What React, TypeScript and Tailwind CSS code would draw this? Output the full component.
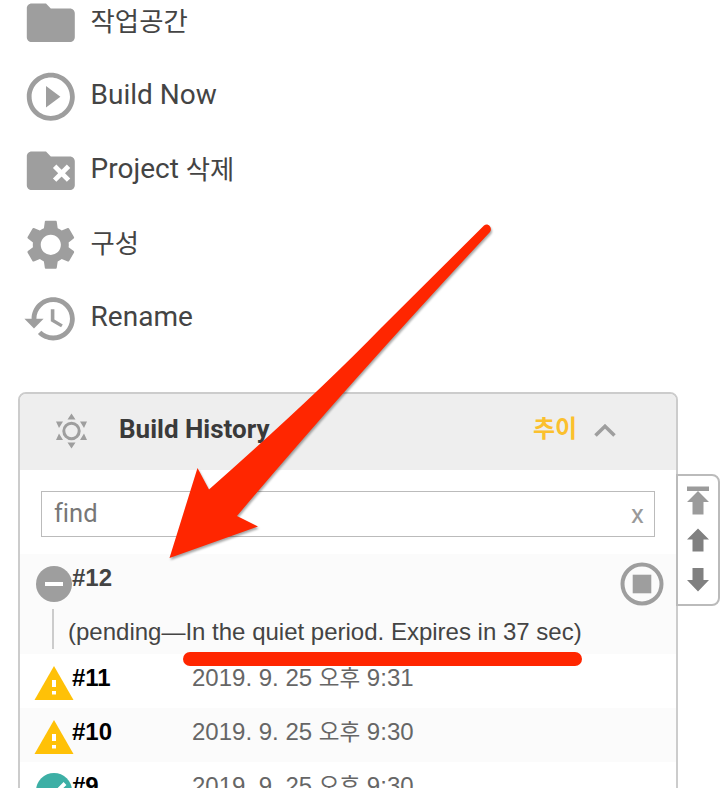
import type { ReactNode } from 'react';

const FOLDER = 'M10 4H4c-1.1 0-1.99.9-1.99 2L2 18c0 1.1.9 2 2 2h16c1.1 0 2-.9 2-2V8c0-1.1-.9-2-2-2h-8l-2-2z';

const sansText = "font-['Liberation_Sans','Noto_Sans_CJK_KR',sans-serif]";

function MenuItem({ label, korean, children }: { label?: string; korean?: string; children: ReactNode }) {
  return (
    <li className="flex h-[74px] items-center">
      <svg viewBox="0 0 24 24" className="h-[57.6px] w-[57.6px] shrink-0 fill-[#9e9e9e]">{children}</svg>
      <span className="mb-[4px] ml-[11px] whitespace-pre text-[28px] leading-8 text-[#444]">
        {label}
        {korean && <span className="relative top-px text-[26.4px]">{korean}</span>}
      </span>
    </li>
  );
}

function Warning() {
  return (
    <svg viewBox="0 0 40 36" className="h-9 w-10">
      <path d="M20 1 39.5 35H.5Z" fill="#ffc107" />
      <path d="M18 15h4v7h-4zM18 26h4v3.5h-4z" fill="#fff" />
    </svg>
  );
}

function Success() {
  return (
    <svg viewBox="0 0 40 36" className="h-9 w-10">
      <circle cx="20" cy="18" r="18" fill="#3dafa5" />
      <path d="m11 18 6 6.5L31 10.5" fill="none" stroke="#fff" strokeWidth="4" />
    </svg>
  );
}

function BuildRow({ id, time, shade, children }: { id: string; time: string; shade?: boolean; children: ReactNode }) {
  return (
    <div className={`flex h-[54px] shrink-0 pl-[13.5px] ${shade ? 'bg-[#fbfbfb]' : 'bg-white'}`}>
      <div className="mt-[11px] w-10">{children}</div>
      <b className="-ml-[1.5px] w-[120px] pt-[10px] text-[24px] leading-7 text-black">{id}</b>
      <span className="whitespace-pre pt-[10px] text-[24px] leading-7 text-[#666]">
        2019. 9. 25 <span className="text-[22.5px]">오후</span> {time}
      </span>
    </div>
  );
}

export default function App() {
  return (
    <main className="relative h-[788px] w-[726px] overflow-hidden bg-white font-[Roboto,'Noto_Sans_CJK_KR',sans-serif]">
      <ul className="-mt-[14px] flex h-[406px] flex-col pl-[22px]">
        <MenuItem korean="작업공간"><path d={FOLDER} /></MenuItem>
        <MenuItem label="Build Now">
          <path d="M10 16.5l6-4.5-6-4.5v9zM12 2C6.48 2 2 6.48 2 12s4.48 10 10 10 10-4.48 10-10S17.52 2 12 2zm0 18c-4.41 0-8-3.59-8-8s3.59-8 8-8 8 3.59 8 8-3.59 8-8 8z" />
        </MenuItem>
        <MenuItem label="Project " korean="삭제">
          <path d={FOLDER} />
          <path d="m13.3 10.1 5.8 5.8m0-5.800-5.8 5.800" transform="translate(.3 0)" fill="none" stroke="#fff" strokeWidth="2" />
        </MenuItem>
        <MenuItem korean="구성">
          <path d="M19.43 12.98c.04-.32.07-.64.07-.98s-.03-.66-.07-.98l2.11-1.65c.19-.15.24-.42.12-.64l-2-3.46c-.12-.22-.39-.3-.61-.22l-2.49 1c-.52-.4-1.08-.73-1.69-.98l-.38-2.65C14.46 2.18 14.25 2 14 2h-4c-.25 0-.46.18-.49.42l-.38 2.65c-.61.25-1.17.59-1.69.98l-2.49-1c-.23-.09-.49 0-.61.22l-2 3.46c-.13.22-.07.49.12.64l2.11 1.65c-.04.32-.07.65-.07.98s.03.66.07.98l-2.11 1.65c-.19.15-.24.42-.12.64l2 3.46c.12.22.39.3.61.22l2.49-1c.52.4 1.08.73 1.69.98l.38 2.65c.03.24.24.42.49.42h4c.25 0 .46-.18.49-.42l.38-2.65c.61-.25 1.17-.59 1.69-.98l2.49 1c.23.09.49 0 .61-.22l2-3.46c.12-.22.07-.49-.12-.64l-2.11-1.65zM12 16.2c-2.320 0-4.200-1.880-4.200-4.200s1.880-4.200 4.200-4.200 4.200 1.880 4.200 4.200-1.880 4.200-4.200 4.200z" />
        </MenuItem>
        <MenuItem label="Rename">
          <path d="M13 3c-4.97 0-9 4.03-9 9H1l4 4 4-4H6c0-3.87 3.13-7 7-7s7 3.13 7 7-3.13 7-7 7c-1.93 0-3.68-.79-4.94-2.06l-1.42 1.42C8.27 19.99 10.51 21 13 21c4.97 0 9-4.03 9-9s-4.03-9-9-9zm-1 5v5l4.28 2.54.72-1.21-3.5-2.08V8H12z" />
        </MenuItem>
      </ul>

      <div className="flex items-start pl-[18px]">
        <section className="flex h-[430px] w-[660px] shrink-0 flex-col overflow-hidden rounded-t-lg border-2 border-[#ccc]">
          <header className="flex h-[76px] shrink-0 items-center bg-[#eee] pb-[2px] pl-[35px]">
            <svg viewBox="0 0 32 36" className="h-9 w-8 fill-[#9e9e9e]">
              <circle cx="16.500" cy="18" r="7.700" fill="none" stroke="#9e9e9e" strokeWidth="3" />
              <path d="m16.500.5 4 6h-8zM16.500 35.500l4-6h-8zM1 8.500H8L4 15zM32 8.500H25L29 15zM1 27H8L4 20.500zM32 27H25L29 20.500z" />
            </svg>
            <h2 className="mb-[4px] ml-[32px] w-[414px] text-[26px] font-bold text-[#3a3a3a]">Build History</h2>
            <span className="mb-[4px] text-[24px] font-bold text-[#fbc02d]">추이</span>
            <svg viewBox="0 0 22 14" className="ml-[17px] h-[14px] w-[22px]">
              <path d="m1.500 11.500 9.500-9.200L20.500 11.500" fill="none" stroke="#9e9e9e" strokeWidth="3.600" />
            </svg>
          </header>
          <div className="h-[84px] shrink-0 px-[21px] pt-[21px]">
            <div className="flex h-[46px] items-center justify-between border border-[#bbb] pl-3 pr-[10px] text-[26px]">
              <span className="mb-px text-[25.5px] text-[#777] [font-variant-ligatures:none]">find</span>
              <span className="text-[#999]">x</span>
            </div>
          </div>
          <div className={sansText}>
            <div className="h-[100px] bg-[#fbfbfb] pl-[15.500px] pr-[12px]">
              <div className="flex h-[55px]">
                <svg viewBox="0 0 36 36" className="mt-[11.500px] h-9 w-9">
                  <circle cx="18" cy="18" r="18" fill="#9e9e9e" />
                  <path d="M9 16h18v4H9z" fill="#fff" />
                </svg>
                <b className="ml-[.5px] grow pt-[10px] text-[24px] leading-7 text-[#444]">#12</b>
                <svg viewBox="0 0 44 44" className="mt-[7.500px] h-11 w-11">
                  <circle cx="22" cy="22" r="19.500" fill="none" stroke="#9e9e9e" strokeWidth="4" />
                  <path d="M12.700 12.700h18.600v18.600H12.700z" fill="#9e9e9e" />
                </svg>
              </div>
              <div className="ml-[16.500px] h-10 border-l-2 border-[#ccc] pl-[14px]">
                <p className="whitespace-nowrap pt-[9px] text-[24px] leading-7 text-[#444]">(pending—In the quiet period. Expires in 37 sec)</p>
              </div>
            </div>
            <BuildRow id="#11" time="9:31"><Warning /></BuildRow>
            <BuildRow id="#10" time="9:30" shade><Warning /></BuildRow>
            <BuildRow id="#9" time="9:30"><Success /></BuildRow>
          </div>
        </section>
        <nav className="-ml-[2px] mt-[82px] h-[132px] w-[44px] rounded-r-lg border-2 border-[#bbb] bg-white">
          <svg viewBox="0 0 40 128" className="h-32 w-10 blur-[0.6px]">
            <path d="M9 10.500h22v4.500H9zM20 15 31 26H25.500V38.500H14.500V26H9z" fill="#9b9b9b" />
            <path d="m20 52.500 11 11H25.500V75.500H14.500V63.500H9zM14.500 92H25.500v12H31L20 115.500 9 104h5.500z" fill="#808080" />
          </svg>
        </nav>
      </div>

      <svg viewBox="0 0 726 788" className="pointer-events-none absolute inset-0 h-full w-full drop-shadow-[1px_2px_1px_rgba(0,0,0,0.35)]">
        <path d="M169.500 558 197.500 468 209 489.500Q315 396 381 328L484 225.500C488 222 493 228 490 232Q350 382 237 516L258 526.500Z" fill="#ff2600" />
      </svg>
      <div className="absolute left-[183px] top-[652px] h-[14px] w-[399px] rounded-full bg-[#ff2600]" />
    </main>
  );
}
